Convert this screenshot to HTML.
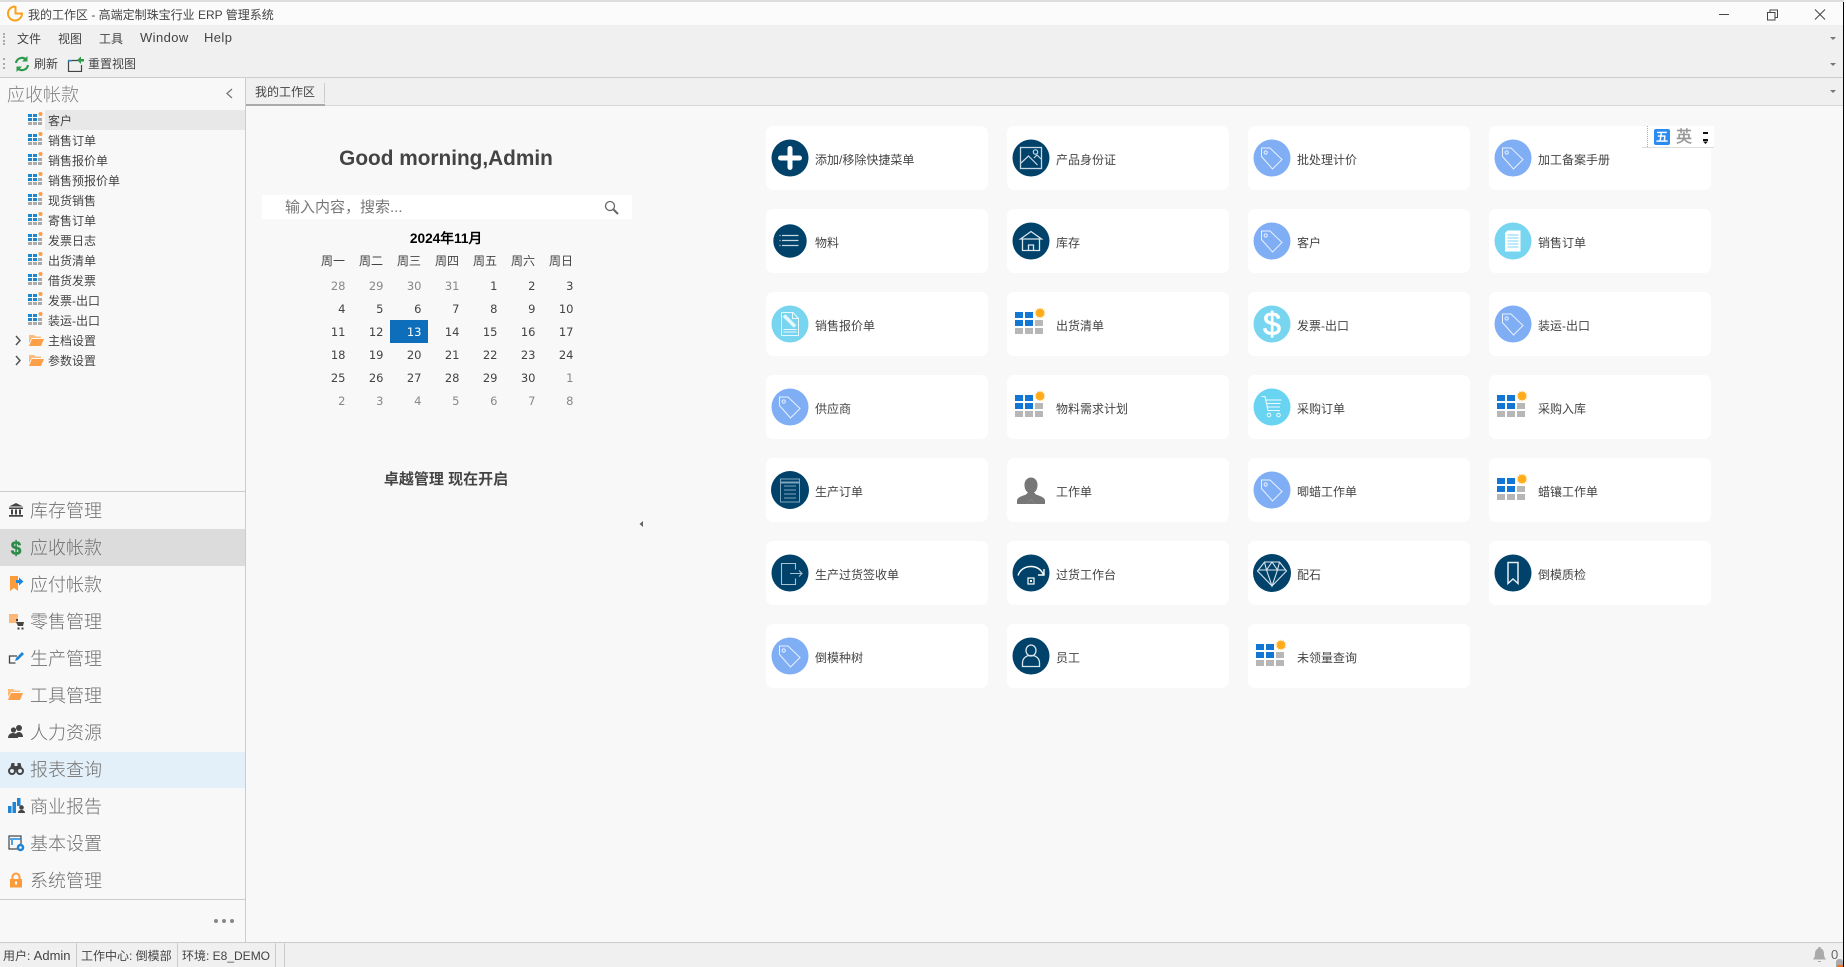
<!DOCTYPE html>
<html lang="zh"><head><meta charset="utf-8"><title>我的工作区</title>
<style>
html,body{margin:0;padding:0;width:1846px;height:967px;overflow:hidden;background:#f8f8f8}
body{font:12px "Liberation Sans","WenQuanYi Zen Hei","Noto Sans CJK SC",sans-serif;color:#444;position:relative}
.a{position:absolute;white-space:nowrap}
.t{position:absolute;white-space:nowrap;line-height:20px;height:20px}
#tree .r{position:absolute;left:0;width:245px;height:20px}
#tree .r svg{position:absolute;left:28px;top:2px}
#tree .r span{position:absolute;left:48px;top:0;line-height:23px;color:#444}
#nav div{position:absolute;left:0;width:245px;height:37px;line-height:37px;font:18px/37px "Liberation Sans","Noto Sans CJK SC",sans-serif;color:#707070;font-weight:300}
#nav span{position:absolute;left:30px;top:1px}
#nav svg{position:absolute;left:8px;top:10px}
#cards{position:absolute;left:766px;top:126px;display:grid;grid-template-columns:repeat(4,222px);grid-auto-rows:64px;column-gap:19px;row-gap:19px}
.c{position:relative;background:#fff;border-radius:7px;height:64px}
.c svg{position:absolute;left:5px;top:13px}
.c span{position:absolute;left:49px;top:0;line-height:68px;color:#444;white-space:nowrap}
#cal{position:absolute;left:314px;top:251px;display:grid;grid-template-columns:repeat(7,38px);font:11.5px/25px "DejaVu Sans",sans-serif;color:#444}
#cal b{font:12px/23px "Liberation Sans","WenQuanYi Zen Hei",sans-serif;text-align:center;color:#444;margin-top:-1px;height:24px}
#cal i{font-style:normal;text-align:right;padding-right:6.5px;height:23px}
#cal .g{color:#888}
#cal .s{background:#0d6ebc;color:#fff}
.sep{position:absolute;top:943px;width:1px;height:24px;background:#ccc}
.st{font-size:12px}
.st em{font-style:normal;font-size:13px}
</style></head><body>
<svg width="0" height="0" style="position:absolute">
<symbol id="sg" viewBox="0 0 15 14"><g fill="#1a86d0"><rect x="0" y="2" width="4" height="3"/><rect x="5" y="2" width="4" height="3"/><rect x="0" y="6" width="4" height="3"/><rect x="5" y="6" width="4" height="3"/></g><g fill="#aaa"><rect x="10" y="6" width="4" height="3"/><rect x="0" y="10" width="4" height="3"/><rect x="5" y="10" width="4" height="3"/><rect x="10" y="10" width="4" height="3"/></g><circle cx="12.5" cy="2" r="2" fill="#f9a04a"/></symbol>
<symbol id="fold" viewBox="0 0 15 12"><path d="M0 1h5l1.500 1.500h5.500v1.500H3L0 9z" fill="#fdbb7a"/><path d="M3 5h12l-3 7H0z" fill="#fb9f48"/></symbol>
<symbol id="bg" viewBox="0 0 38 38"><g fill="#1276d4"><rect x="3" y="7" width="8" height="6"/><rect x="13" y="7" width="8" height="6"/><rect x="3" y="15" width="8" height="6"/><rect x="13" y="15" width="8" height="6"/></g><g fill="#b7b7b7"><rect x="23" y="15" width="8" height="6"/><rect x="3" y="23" width="8" height="6"/><rect x="13" y="23" width="8" height="6"/><rect x="23" y="23" width="8" height="6"/></g><path d="M28 2.800l1 2.400 2.200-1.400.3 2.500 2.500.3-1.400 2.200 2.400 1-2.400 1 1.400 2.200-2.500.3-.3 2.500-2.200-1.400-1 2.400-1-2.400-2.200 1.400-.3-2.500-2.500-.3 1.400-2.200-2.400-1 2.400-1-1.400-2.200 2.500-.3.3-2.500 2.200 1.400z" fill="#ffab1a" transform="translate(28 8) scale(.8) translate(-28 -9.800)"/></symbol>
<symbol id="tag" viewBox="0 0 38 38"><circle cx="19" cy="19" r="18.500" fill="#80aef5"/><path d="M8.500 9h8.500l12 11.500-9.500 9.500-11-12.500z" fill="none" stroke="#e8f0fd" stroke-width="1"/><circle cx="12.700" cy="13.500" r="1.600" fill="none" stroke="#e8f0fd"/></symbol>
<symbol id="plus" viewBox="0 0 38 38"><circle cx="19" cy="19" r="18.500" fill="#00426a"/><path d="M9.500 19h19M19 9.500v19" stroke="#fff" stroke-width="5" stroke-linecap="round"/></symbol>
<symbol id="img" viewBox="0 0 38 38"><circle cx="19" cy="19" r="18.500" fill="#00426a"/><rect x="8.500" y="8.500" width="21" height="21" fill="none" stroke="#c8d8e2" stroke-width="1.300"/><path d="M9 24l7.500-7 9 9M22 19l3-3 4 4" fill="none" stroke="#c8d8e2" stroke-width="1.200"/><circle cx="23.500" cy="13" r="2.200" fill="none" stroke="#c8d8e2" stroke-width="1.200"/></symbol>
<symbol id="list" viewBox="0 0 38 38"><circle cx="19" cy="19" r="16.700" fill="#00426a"/><path d="M11 13.500h16.500M11 18.500h16.500M11 23.500h16.500" stroke="#c8d8e2" stroke-width="1.200"/><path d="M8.500 13.500h1M8.500 18.500h1M8.500 23.500h1" stroke="#c8d8e2" stroke-width="1.200"/></symbol>
<symbol id="home" viewBox="0 0 38 38"><circle cx="19" cy="19" r="18.500" fill="#00426a"/><path d="M8.500 17L19 9.500 29.500 17zM10.500 17v11.500h17V17M16.500 28.500v-5.500h5v5.500" fill="none" stroke="#dbe6ec" stroke-width="1.300"/></symbol>
<symbol id="pen" viewBox="0 0 38 38"><circle cx="19" cy="19" r="18.500" fill="#78d5f0"/><path d="M10.500 7.500h11.500l5.500 6v17h-17zM21.500 7.500v6h6" fill="none" stroke="#e6f8fd" stroke-width="1"/><path d="M13 10.500l11 11" stroke="#e6f8fd" stroke-width="3.500"/><path d="M12.500 24.500h13M12.500 27h13" stroke="#e6f8fd" stroke-width="1"/></symbol>
<symbol id="doc" viewBox="0 0 38 38"><circle cx="19" cy="19" r="18.500" fill="#78d5f0"/><path d="M13.500 8.500h13v21h-15.500v-18.500z" fill="#fff"/><path d="M13.500 13h11M13.500 16h11M13.500 19h11M13.500 22h11M13.500 25h11" stroke="#78d5f0" stroke-width="1"/></symbol>
<symbol id="dol" viewBox="0 0 38 38"><circle cx="19" cy="19" r="18.500" fill="#78d5f0"/><text x="19" y="30" text-anchor="middle" fill="#fff" stroke="#fff" stroke-width=".7" font-family="Liberation Sans" font-size="32">$</text></symbol>
<symbol id="cart" viewBox="0 0 38 38"><circle cx="19" cy="19" r="18.500" fill="#68d4f2"/><path d="M8.500 8.500h3.500l3 14h12M12.500 12h16M13.500 15.500h14M14 19h13" fill="none" stroke="#ecfafd" stroke-width="1.100"/><circle cx="16" cy="27" r="1.800" fill="none" stroke="#ecfafd"/><circle cx="25.500" cy="27" r="1.800" fill="none" stroke="#ecfafd"/></symbol>
<symbol id="order" viewBox="0 0 38 38"><circle cx="19" cy="19" r="19" fill="#00426a"/><rect x="9.500" y="8" width="19" height="23" fill="none" stroke="#7fa5bd" stroke-width="1"/><path d="M9.500 11.500h19" stroke="#7fa5bd" stroke-width="2"/><path d="M13 15h12M13 19h12M13 23h12M13 27h12" stroke="#7fa5bd" stroke-width="1"/></symbol>
<symbol id="man" viewBox="0 0 38 38"><path d="M5 33v-4c2-4 6-4 9-5.500l2-2c-3-2-3.500-5-3.500-8 0-4 3-7 6.500-7s6.500 3 6.500 7c0 3-.5 6-3.500 8l2 2c3 1.500 7 1.500 9 5.500v4H23l-4-5-4 5z" fill="#777"/><path d="M15 33l4-5 4 5z" fill="#777"/></symbol>
<symbol id="out" viewBox="0 0 38 38"><circle cx="19" cy="19" r="18.500" fill="#00426a"/><path d="M24.500 14.500V8.500h-14v21h14v-6" fill="none" stroke="#a9c3d3" stroke-width="1.100" transform="translate(0 1)"/><path d="M19 19.500h12M28 16.500l3 3-3 3" fill="none" stroke="#a9c3d3" stroke-width="1.100"/></symbol>
<symbol id="arc" viewBox="0 0 38 38"><circle cx="19" cy="19" r="18.500" fill="#00426a"/><path d="M6 21.500c2-6 7-9 13-9s10 3 12.500 8" fill="none" stroke="#fff" stroke-width="1.400"/><path d="M32 15v6h-6" fill="none" stroke="#fff" stroke-width="1.400"/><rect x="16" y="24" width="6" height="6" fill="none" stroke="#fff" stroke-width="1.200"/><rect x="18" y="26" width="2" height="2" fill="#fff"/></symbol>
<symbol id="dia" viewBox="0 0 38 38"><circle cx="19" cy="19" r="19" fill="#00426a"/><path d="M11.500 8h15l7 9L19 32 4.500 17zM5 16h28M11.500 8l2 8 5.500 16 5.500-16 2-8M13.500 16L19 8l5.500 8" fill="none" stroke="#d8e5ec" stroke-width="1.100"/></symbol>
<symbol id="book" viewBox="0 0 38 38"><circle cx="19" cy="19" r="18.500" fill="#00426a"/><path d="M14 8.500h10v21l-5-4.500-5 4.500z" fill="none" stroke="#e6eef3" stroke-width="1.500"/></symbol>
<symbol id="emp" viewBox="0 0 38 38"><circle cx="19" cy="19" r="18.500" fill="#00426a"/><ellipse cx="19" cy="13.500" rx="5" ry="5.500" fill="none" stroke="#dbe6ec" stroke-width="1.300"/><path d="M10.500 29.500v-3.500c0-5 4-7 6-7.500h5c2 .5 6 2.500 6 7.500v3.500z" fill="none" stroke="#dbe6ec" stroke-width="1.300"/></symbol>
</svg>

<!-- title bar -->
<div class="a" style="left:0;top:0;width:1846px;height:25px;background:#fbfbfb;border-top:2px solid #ddd;box-sizing:border-box"></div>
<svg class="a" style="left:6px;top:4px" width="18" height="18" viewBox="0 0 18 18"><path d="M9 2.500A7 7 0 1 0 16 9.500H9.500V2" fill="none" stroke="#f9a11b" stroke-width="2"/></svg>
<div class="t" style="left:28px;top:5px;color:#444">我的工作区 - 高端定制珠宝行业 ERP 管理系统</div>
<svg class="a" style="left:1715px;top:8px" width="120" height="14" viewBox="0 0 120 14"><path d="M4 6.500h10" stroke="#444"/><path d="M52.500 4.500h7.500v7.500h-7.500zM55 4.500v-2.500h7.500v7.500H60" fill="none" stroke="#444"/><path d="M100 1.500l10 10M110 1.500l-10 10" stroke="#444"/></svg>

<!-- menu + toolbar -->
<div class="a" style="left:0;top:25px;width:1846px;height:53px;background:#f0f0f0;border-bottom:1px solid #ccc;box-sizing:border-box"></div>
<div class="a" style="left:3px;top:33px;width:2px;height:12px;border-left:2px dotted #aaa"></div>
<div class="a" style="left:3px;top:58px;width:2px;height:11px;border-left:2px dotted #aaa"></div>
<div class="t" style="left:17px;top:29px">文件</div>
<div class="t" style="left:58px;top:29px">视图</div>
<div class="t" style="left:99px;top:29px">工具</div>
<div class="t" style="left:140px;top:28px;font-size:13px;letter-spacing:.4px">Window</div>
<div class="t" style="left:204px;top:28px;font-size:13px;letter-spacing:.4px">Help</div>
<svg class="a" style="left:14px;top:56px" width="16" height="16" viewBox="0 0 16 16"><path d="M2 7a6 6 0 0 1 10.500-3M14 9a6 6 0 0 1-10.500 3" fill="none" stroke="#2f9a4c" stroke-width="2.200"/><path d="M13.500 0v5.500H8zM2.500 16v-5.500H8z" fill="#2f9a4c"/></svg>
<div class="t" style="left:34px;top:54px">刷新</div>
<svg class="a" style="left:67px;top:56px" width="17" height="16" viewBox="0 0 17 16"><path d="M11 4.500H1.500v11h13V9" fill="none" stroke="#444" stroke-width="1.200"/><path d="M1 4h4v1.500H1z" fill="#1a86d0"/><path d="M10 4l4-3.500V3h3v2.500h-3V8z" fill="#2f9a4c"/></svg>
<div class="t" style="left:88px;top:54px">重置视图</div>
<svg class="a" style="left:1830px;top:35px" width="10" height="34" viewBox="0 0 10 34"><path d="M0 2h6L3 5zM0 28h6L3 31z" fill="#777"/></svg>

<!-- tab bar -->
<div class="a" style="left:246px;top:78px;width:1597px;height:28px;background:#f0f0f0;border-bottom:1px solid #d9d9d9;box-sizing:border-box"></div>
<div class="a" style="left:246px;top:104px;width:79px;height:2px;background:#aaa"></div>
<div class="a" style="left:324px;top:83px;width:1px;height:20px;background:#ccc"></div>
<div class="t" style="left:255px;top:82px">我的工作区</div>
<svg class="a" style="left:1830px;top:90px" width="8" height="5" viewBox="0 0 8 5"><path d="M0 0h6L3 3z" fill="#777"/></svg>

<!-- sidebar -->
<div class="a" style="left:0;top:78px;width:245px;height:864px;background:#f8f8f8"></div>
<div class="a" style="left:245px;top:78px;width:1px;height:864px;background:#ccc"></div>
<div class="a" style="left:7px;top:83px;font:18px/25px 'Liberation Sans','Noto Sans CJK SC',sans-serif;color:#808080;font-weight:300">应收帐款</div>
<svg class="a" style="left:225px;top:88px" width="9" height="11" viewBox="0 0 9 11"><path d="M7 1L2 5.500 7 10" fill="none" stroke="#777" stroke-width="1.300"/></svg>
<div class="a" style="left:45px;top:110px;width:200px;height:20px;background:#e8e8e8"></div>
<div id="tree">
<div class="r" style="top:110px"><svg width="15" height="14"><use href="#sg"/></svg><span>客户</span></div>
<div class="r" style="top:130px"><svg width="15" height="14"><use href="#sg"/></svg><span>销售订单</span></div>
<div class="r" style="top:150px"><svg width="15" height="14"><use href="#sg"/></svg><span>销售报价单</span></div>
<div class="r" style="top:170px"><svg width="15" height="14"><use href="#sg"/></svg><span>销售预报价单</span></div>
<div class="r" style="top:190px"><svg width="15" height="14"><use href="#sg"/></svg><span>现货销售</span></div>
<div class="r" style="top:210px"><svg width="15" height="14"><use href="#sg"/></svg><span>寄售订单</span></div>
<div class="r" style="top:230px"><svg width="15" height="14"><use href="#sg"/></svg><span>发票日志</span></div>
<div class="r" style="top:250px"><svg width="15" height="14"><use href="#sg"/></svg><span>出货清单</span></div>
<div class="r" style="top:270px"><svg width="15" height="14"><use href="#sg"/></svg><span>借货发票</span></div>
<div class="r" style="top:290px"><svg width="15" height="14"><use href="#sg"/></svg><span>发票-出口</span></div>
<div class="r" style="top:310px"><svg width="15" height="14"><use href="#sg"/></svg><span>装运-出口</span></div>
<div class="r" style="top:330px"><svg style="left:29px;top:4px" width="15" height="12"><use href="#fold"/></svg><span>主档设置</span></div>
<div class="r" style="top:350px"><svg style="left:29px;top:4px" width="15" height="12"><use href="#fold"/></svg><span>参数设置</span></div>
</div>
<svg class="a" style="left:15px;top:335px" width="7" height="32" viewBox="0 0 7 32"><path d="M1 1l4 4.500-4 4.500M1 21l4 4.500-4 4.500" fill="none" stroke="#555" stroke-width="1.500"/></svg>

<div class="a" style="left:0;top:491px;width:245px;height:1px;background:#ccc"></div>
<div class="a" style="left:0;top:529px;width:245px;height:37px;background:#dcdcdc"></div>
<div class="a" style="left:0;top:752px;width:245px;height:36px;background:#e3f0f9"></div>
<div id="nav">
<div style="top:492px"><svg width="16" height="16" viewBox="0 0 16 16"><path d="M8 1l7 3.500H1zM1 5.500h14V7H1zM1 13h14v1.800H1z" fill="#444"/><path d="M3 7.500h2v5H3zM7 7.500h2v5H7zM11 7.500h2v5h-2z" fill="#444"/></svg><span>库存管理</span></div>
<div style="top:529px"><svg width="16" height="18" viewBox="0 0 16 18"><text x="8" y="15.500" text-anchor="middle" font-family="Liberation Sans" font-weight="bold" font-size="19" stroke="#2e8b4a" stroke-width=".5" fill="#2e8b4a">$</text></svg><span>应收帐款</span></div>
<div style="top:566px"><svg width="16" height="16" viewBox="0 0 16 16"><path d="M2 0h8v15l-4-3-4 3z" fill="#fb9b3a"/><path d="M8 4h3V1.500L15.500 5.500 11 9.500V7H8z" fill="#1e86d8"/></svg><span>应付帐款</span></div>
<div style="top:603px"><svg width="17" height="17" viewBox="0 0 17 17"><rect x="1" y="1" width="9" height="9" fill="#fdb878"/><rect x="8" y="6" width="2" height="2" fill="#444"/><path d="M8 9h8l-1 4H10zM9.500 14.500h2v2h-2zM13.500 14.500h2v2h-2z" fill="#444"/></svg><span>零售管理</span></div>
<div style="top:640px"><svg width="17" height="16" viewBox="0 0 17 16"><path d="M9 6H1.500v7h6" fill="none" stroke="#444" stroke-width="1.300"/><path d="M7 11l1-3 6-6 2 2-6 6z" fill="#1e86d8"/></svg><span>生产管理</span></div>
<div style="top:677px"><svg width="15" height="14" viewBox="0 0 15 12"><use href="#fold"/></svg><span>工具管理</span></div>
<div style="top:714px"><svg width="16" height="16" viewBox="0 0 16 16"><circle cx="11" cy="4" r="3" fill="#444"/><path d="M7 13c0-3 2-5 4-5s4 2 4 5z" fill="#444"/><circle cx="5.500" cy="6" r="2.600" fill="#444"/><path d="M0 14c0-3 2-5 5-5s5 2 5 5z" fill="#444"/></svg><span>人力资源</span></div>
<div style="top:751px"><svg width="16" height="15" viewBox="0 0 16 15"><circle cx="4" cy="10" r="3" fill="none" stroke="#444" stroke-width="2"/><circle cx="12" cy="10" r="3" fill="none" stroke="#444" stroke-width="2"/><path d="M2 8l1.500-6h3v6zM14 8l-1.500-6h-3v6zM6.500 5h3v4h-3z" fill="#444"/></svg><span>报表查询</span></div>
<div style="top:788px"><svg width="17" height="16" viewBox="0 0 17 16" style="left:8px"><path d="M0 8h3.500v7H0zM4.500 4h3.500v11H4.500zM9 0h3.500v8H9v7z" fill="#1e86d8"/><circle cx="13.500" cy="9.500" r="2.300" fill="#444"/><path d="M10 15c0-2 1.500-3 3.500-3s3.500 1 3.500 3z" fill="#444"/></svg><span>商业报告</span></div>
<div style="top:825px"><svg width="17" height="17" viewBox="0 0 17 17"><rect x="1" y="1" width="12" height="13" fill="none" stroke="#444" stroke-width="1.200"/><path d="M2 4h11M4 5v5" stroke="#1e86d8" stroke-width="1.500"/><circle cx="12.500" cy="12.500" r="3.800" fill="#1e86d8"/><circle cx="12.500" cy="12.500" r="1.300" fill="#f8f8f8"/></svg><span>基本设置</span></div>
<div style="top:862px"><svg width="16" height="16" viewBox="0 0 16 16"><path d="M4.500 7V5a3.500 3.500 0 0 1 7 0v2" fill="none" stroke="#fb9b3a" stroke-width="2"/><rect x="2" y="7" width="12" height="8.500" fill="#fb9b3a"/><rect x="7" y="9.500" width="2" height="3" fill="#fff"/></svg><span>系统管理</span></div>
</div>
<div class="a" style="left:0;top:899px;width:245px;height:1px;background:#ccc"></div>
<svg class="a" style="left:213px;top:918px" width="22" height="6"><circle cx="3" cy="3" r="2" fill="#888"/><circle cx="11" cy="3" r="2" fill="#888"/><circle cx="19" cy="3" r="2" fill="#888"/></svg>

<!-- greeting column -->
<div class="a" style="left:246px;width:400px;top:146px;text-align:center;font:bold 20.800px/26px 'Liberation Sans',sans-serif;color:#444">Good morning,Admin</div>
<div class="a" style="left:262px;top:195px;width:370px;height:24px;background:#fff"></div>
<div class="a" style="left:285px;top:195px;font:15px/25px 'Liberation Sans','Noto Sans CJK SC',sans-serif;color:#777">输入内容，搜索...</div>
<svg class="a" style="left:604px;top:200px" width="15" height="15" viewBox="0 0 15 15"><circle cx="6" cy="6" r="4.500" fill="none" stroke="#666" stroke-width="1.300"/><path d="M9.500 9.500l4.500 4.500" stroke="#666" stroke-width="2"/></svg>
<div class="a" style="left:246px;width:400px;top:229px;text-align:center;font:bold 13.700px/20px 'Liberation Sans','WenQuanYi Zen Hei',sans-serif;color:#000">2024年11月</div>
<div id="cal">
<b>周一</b><b>周二</b><b>周三</b><b>周四</b><b>周五</b><b>周六</b><b>周日</b>
<i class="g">28</i><i class="g">29</i><i class="g">30</i><i class="g">31</i><i>1</i><i>2</i><i>3</i>
<i>4</i><i>5</i><i>6</i><i>7</i><i>8</i><i>9</i><i>10</i>
<i>11</i><i>12</i><i class="s">13</i><i>14</i><i>15</i><i>16</i><i>17</i>
<i>18</i><i>19</i><i>20</i><i>21</i><i>22</i><i>23</i><i>24</i>
<i>25</i><i>26</i><i>27</i><i>28</i><i>29</i><i>30</i><i class="g">1</i>
<i class="g">2</i><i class="g">3</i><i class="g">4</i><i class="g">5</i><i class="g">6</i><i class="g">7</i><i class="g">8</i>
</div>
<div class="a" style="left:246px;width:400px;top:470px;text-align:center;font:bold 15px/20px 'Liberation Sans','Noto Sans CJK SC',sans-serif;color:#444">卓越管理 现在开启</div>
<svg class="a" style="left:639px;top:520px" width="5" height="8" viewBox="0 0 5 8"><path d="M4 1v6L0.500 4z" fill="#666"/></svg>

<!-- cards -->
<div id="cards">
<div class="c"><svg width="38" height="38"><use href="#plus"/></svg><span>添加/移除快捷菜单</span></div>
<div class="c"><svg width="38" height="38"><use href="#img"/></svg><span>产品身份证</span></div>
<div class="c"><svg width="38" height="38"><use href="#tag"/></svg><span>批处理计价</span></div>
<div class="c"><svg width="38" height="38"><use href="#tag"/></svg><span>加工备案手册</span></div>
<div class="c"><svg width="38" height="38"><use href="#list"/></svg><span>物料</span></div>
<div class="c"><svg width="38" height="38"><use href="#home"/></svg><span>库存</span></div>
<div class="c"><svg width="38" height="38"><use href="#tag"/></svg><span>客户</span></div>
<div class="c"><svg width="38" height="38"><use href="#doc"/></svg><span>销售订单</span></div>
<div class="c"><svg width="38" height="38"><use href="#pen"/></svg><span>销售报价单</span></div>
<div class="c"><svg width="38" height="38"><use href="#bg"/></svg><span>出货清单</span></div>
<div class="c"><svg width="38" height="38"><use href="#dol"/></svg><span>发票-出口</span></div>
<div class="c"><svg width="38" height="38"><use href="#tag"/></svg><span>装运-出口</span></div>
<div class="c"><svg width="38" height="38"><use href="#tag"/></svg><span>供应商</span></div>
<div class="c"><svg width="38" height="38"><use href="#bg"/></svg><span>物料需求计划</span></div>
<div class="c"><svg width="38" height="38"><use href="#cart"/></svg><span>采购订单</span></div>
<div class="c"><svg width="38" height="38"><use href="#bg"/></svg><span>采购入库</span></div>
<div class="c"><svg width="38" height="38"><use href="#order"/></svg><span>生产订单</span></div>
<div class="c"><svg width="38" height="38"><use href="#man"/></svg><span>工作单</span></div>
<div class="c"><svg width="38" height="38"><use href="#tag"/></svg><span>唧蜡工作单</span></div>
<div class="c"><svg width="38" height="38"><use href="#bg"/></svg><span>蜡镶工作单</span></div>
<div class="c"><svg width="38" height="38"><use href="#out"/></svg><span>生产过货签收单</span></div>
<div class="c"><svg width="38" height="38"><use href="#arc"/></svg><span>过货工作台</span></div>
<div class="c"><svg width="38" height="38"><use href="#dia"/></svg><span>配石</span></div>
<div class="c"><svg width="38" height="38"><use href="#book"/></svg><span>倒模质检</span></div>
<div class="c"><svg width="38" height="38"><use href="#tag"/></svg><span>倒模种树</span></div>
<div class="c"><svg width="38" height="38"><use href="#emp"/></svg><span>员工</span></div>
<div class="c"><svg width="38" height="38"><use href="#bg"/></svg><span>未领量查询</span></div>
</div>

<!-- IME toolbar -->
<div class="a" style="left:1642px;top:126px;width:72px;height:21px;background:#fff;border-bottom:1px solid #ddd"></div>
<div class="a" style="left:1647px;top:126px;height:21px;border-left:1px dotted #aaa"></div>
<div class="a" style="left:1654px;top:129px;width:16px;height:16px;background:#2b8cf0;border-radius:2px;color:#fff;font:bold 12px/16px 'Liberation Sans','WenQuanYi Zen Hei',sans-serif;text-align:center">五</div>
<div class="a" style="left:1676px;top:128px;font:16px/19px 'Liberation Sans','Noto Sans CJK SC',sans-serif;color:#999;-webkit-text-stroke:.4px #999">英</div>
<svg class="a" style="left:1702px;top:132px" width="8" height="12" viewBox="0 0 8 12"><path d="M1 0h5v2H1zM1 7h5v2H1zM1 9.500h5L3.500 12z" fill="#111"/></svg>

<!-- status bar -->
<div class="a" style="left:0;top:942px;width:1846px;height:25px;background:#f0f0f0;border-top:1px solid #ccc;box-sizing:border-box"></div>
<div class="t st" style="left:3px;top:946px">用户: <em>Admin</em></div>
<div class="t st" style="left:81px;top:946px">工作中心: 倒模部</div>
<div class="t st" style="left:182px;top:946px">环境: E8_DEMO</div>
<div class="sep" style="left:76px"></div><div class="sep" style="left:177px"></div><div class="sep" style="left:275px"></div><div class="sep" style="left:284px"></div>
<svg class="a" style="left:1813px;top:947px" width="13" height="16" viewBox="0 0 13 16"><path d="M6.500 0c1 0 1.500 .5 1.500 1.500C10.500 2.500 11 5 11 7c0 3 1 4 2 5.500H0C1 11 2 10 2 7c0-2 .5-4.500 3-5.500C5 .5 5.500 0 6.500 0z" fill="#aaa"/><path d="M5 14h3v1H5z" fill="#aaa"/></svg>
<div class="t" style="left:1831px;top:945px;font-size:13px;color:#666">0</div>
<div class="a" style="left:1836px;top:959px;width:7px;height:8px;background:#aaa;border-radius:3px 3px 0 0"></div>
<div class="a" style="left:1837px;top:965px;width:6px;height:2px;background:#f6711d"></div>

<!-- right edge -->
<div class="a" style="left:1843px;top:2px;width:1px;height:965px;background:#000"></div>
<div class="a" style="left:1844px;top:0;width:2px;height:967px;background:#fff"></div>
</body></html>
